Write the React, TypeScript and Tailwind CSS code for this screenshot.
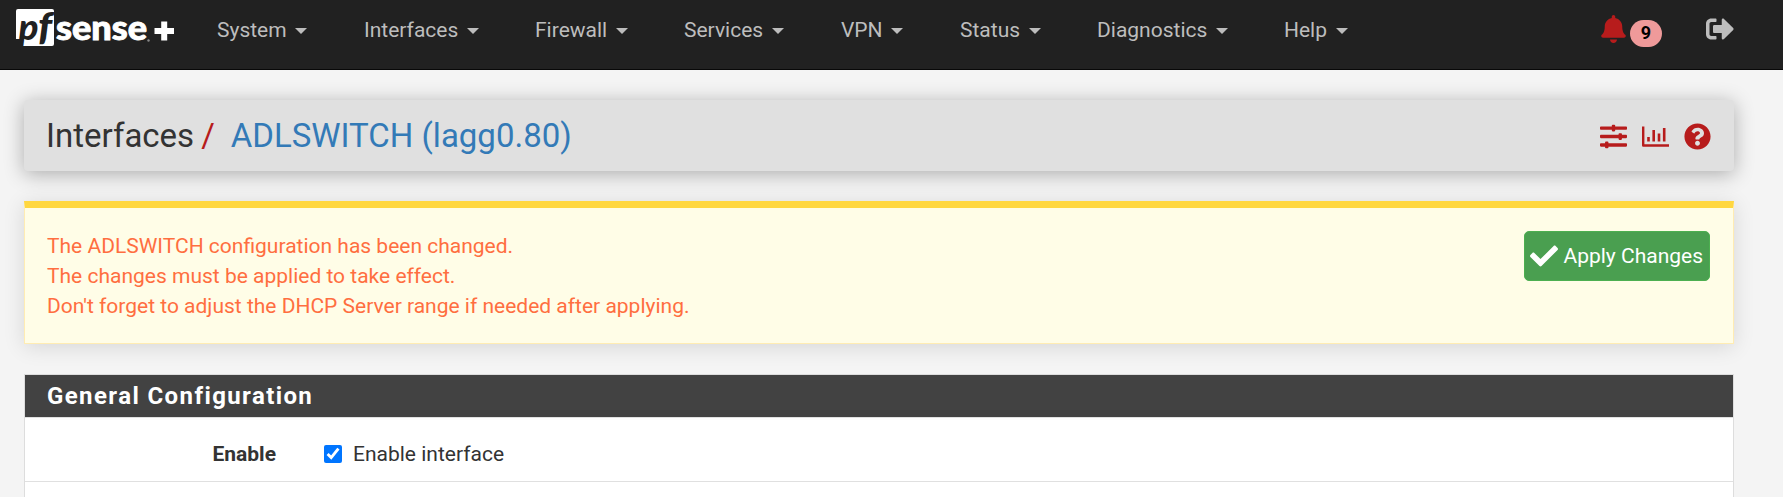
import { FaBell, FaCheck, FaQuestionCircle, FaSignOutAlt, FaSlidersH } from "react-icons/fa";

const menu = [
  { label: "System", width: "w-[147px]" },
  { label: "Interfaces", width: "w-[171px]" },
  { label: "Firewall", width: "w-[149px]" },
  { label: "Services", width: "w-[157px]" },
  { label: "VPN", width: "w-[119px]" },
  { label: "Status", width: "w-[137px]" },
  { label: "Diagnostics", width: "w-[187px]" },
  { label: "Help", width: "w-[120px]" },
];

function Logo() {
  return (
    <svg width="160" height="40" viewBox="0 0 160 40" className="shrink-0 overflow-visible">
      <path d="M2 0H36Q38 0 38 2V35Q38 37 36 37H4L6 30L0 30V2Q0 0 2 0Z" fill="#fff" />
      <text x="2.500" y="31" fontFamily="Lato" fontWeight="900" fontStyle="italic" fontSize="36" fill="#212121" textLength="20" lengthAdjust="spacingAndGlyphs">p</text>
      <text x="22" y="31" fontFamily="Lato" fontWeight="900" fontStyle="italic" fontSize="37" fill="#212121" textLength="14" lengthAdjust="spacingAndGlyphs">f</text>
      <text x="40" y="30.500" fontFamily="Lato" fontWeight="900" fontSize="34" fill="#fff" stroke="#fff" strokeWidth="0.900" textLength="91" lengthAdjust="spacingAndGlyphs">sense</text>
      <circle cx="132.500" cy="31.500" r="1.200" fill="#888" />
      <path d="M138.500 22H158M148.200 12.500V31.500" stroke="#fff" strokeWidth="6" />
    </svg>
  );
}

function ChartIcon() {
  return (
    <svg width="27" height="27" viewBox="0 0 27 27" fill="none" stroke="currentColor">
      <path d="M1.200 3.500V22.500H27" strokeWidth="2.400" strokeLinejoin="round" />
      <path d="M6.500 14V18.500M11.700 7V18.500M17 10.500V18.500M22.200 5V18.500" strokeWidth="2.600" />
    </svg>
  );
}

export default function App() {
  return (
    <div className="h-[497px] w-full overflow-hidden bg-[#f4f4f4] font-['Roboto',sans-serif] text-[21px] leading-[30px] text-[#333]">
      <nav className="flex h-[70px] items-start border-b border-[#080808] bg-[#212121] pl-4 text-[#bdbdbd]">
        <div className="w-[201px] pt-[9px]"><Logo /></div>
        <ul className="flex pt-[15px]">
          {menu.map((m) => (
            <li key={m.label} className={`flex shrink-0 items-center ${m.width}`}>
              {m.label}
              <span className="mt-px ml-[8.500px] border-x-[6px] border-t-[6px] border-x-transparent border-t-[#bdbdbd]" />
            </li>
          ))}
        </ul>
        <div className="mr-[49px] ml-auto flex items-start">
          <FaBell className="mt-[15px] h-7 w-[25px] text-[#b71c1c]" />
          <span className="mt-5 ml-1 h-[27px] w-8 rounded-full bg-[#ef9a9a] text-center text-[18px] leading-[26px] font-bold text-black">9</span>
          <FaSignOutAlt className="mt-[15px] ml-11 size-7" />
        </div>
      </nav>
      <main className="mr-[49px] ml-6 pt-[30px]">
        <header className="flex h-[71px] items-center justify-between rounded-[4px] bg-[#e0e0e0] pr-[23px] pl-[22px] shadow-[0_3px_20px_rgba(0,0,0,0.3)]">
          <h1 className="flex text-[33px] leading-[36px]">
            Interfaces<span className="ml-[7px] text-[#b71c1c]">/</span>
            <span className="ml-4 text-[#337ab7]">ADLSWITCH (lagg0.80)</span>
          </h1>
          <div className="flex items-center gap-[15px] pt-[2px] text-[#b71c1c]">
            <FaSlidersH className="size-[27px]" />
            <ChartIcon />
            <FaQuestionCircle className="size-[27px]" />
          </div>
        </header>
        <section className="mt-[30px] flex h-[143px] items-start justify-between border border-t-[7px] border-[#ffecb3] border-t-[#ffd740] bg-[#fffde7] pt-[23px] pr-[23px] pl-[22px] shadow-[0_3px_20px_rgba(0,0,0,0.12)]">
          <p className="text-[#ff6e40]">
            The ADLSWITCH configuration has been changed.<br />
            The changes must be applied to take effect.<br />
            Don't forget to adjust the DHCP Server range if needed after applying.
          </p>
          <button className="flex h-[50px] w-[186px] items-center justify-between rounded-[5px] border border-[#4caf50] bg-[#4a9f50] pr-[6px] pl-[5px] text-white">
            <FaCheck className="size-7" />Apply Changes
          </button>
        </section>
        <section className="mt-[30px] h-[200px] border border-[#ddd] bg-white">
          <h2 className="h-[42px] bg-[#424242] pl-[22px] text-[24px] leading-[42px] font-bold tracking-[1.400px] text-white">General Configuration</h2>
          <div className="flex h-[65px] items-center border-y border-[#e0e0e0] pt-[9px]">
            <span className="w-[251px] text-right font-bold">Enable</span>
            <label className="ml-[48px] flex items-center">
              <input type="checkbox" defaultChecked className="mr-[11px] size-[18px]" />Enable interface
            </label>
          </div>
        </section>
      </main>
    </div>
  );
}
